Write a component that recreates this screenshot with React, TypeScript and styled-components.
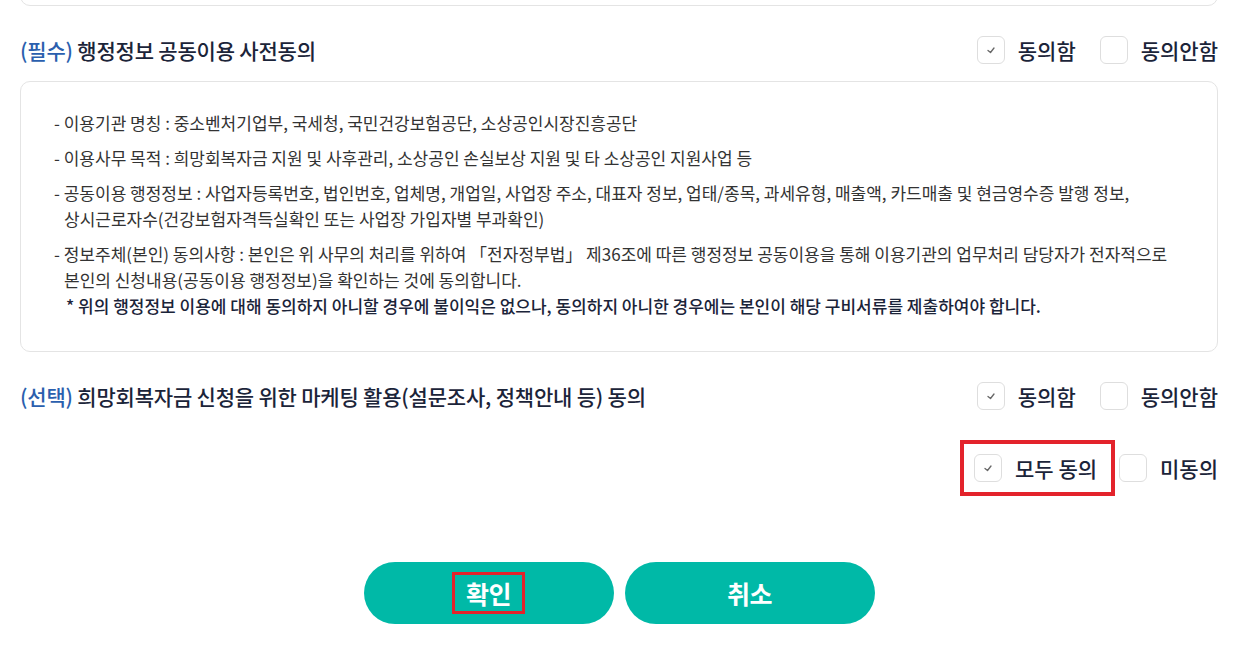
import React, { useState } from 'react'
import styled, { createGlobalStyle } from 'styled-components'

const GlobalStyle = createGlobalStyle`
    body {
        margin: 0;
        background: #fff;
        font-family: 'Noto Sans CJK KR', 'Noto Sans', sans-serif;
        color: #1b2439;
        overflow: hidden;
    }
`

type Choice = 'agree' | 'disagree'

const items = [
    ['- 이용기관 명칭 : 중소벤처기업부, 국세청, 국민건강보험공단, 소상공인시장진흥공단'],
    ['- 이용사무 목적 : 희망회복자금 지원 및 사후관리, 소상공인 손실보상 지원 및 타 소상공인 지원사업 등'],
    [
        '- 공동이용 행정정보 : 사업자등록번호, 법인번호, 업체명, 개업일, 사업장 주소, 대표자 정보, 업태/종목, 과세유형, 매출액, 카드매출 및 현금영수증 발행 정보,',
        '상시근로자수(건강보험자격득실확인 또는 사업장 가입자별 부과확인)'
    ],
    [
        '- 정보주체(본인) 동의사항 : 본인은 위 사무의 처리를 위하여 「전자정부법」 제36조에 따른 행정정보 공동이용을 통해 이용기관의 업무처리 담당자가 전자적으로',
        '본인의 신청내용(공동이용 행정정보)을 확인하는 것에 동의합니다.'
    ]
]

const CheckMark = () => (
    <svg width="12" height="10" viewBox="0 0 12 10">
        <polyline points="3,5.5 5.5,7.5 9,3" fill="none" stroke="#666" strokeWidth="1.3" strokeLinecap="round" strokeLinejoin="round" />
    </svg>
)

const CheckOption: React.FunctionComponent<{
    label: string
    checked: boolean
    onClick: () => void
}> = ({ label, checked, onClick }) => (
    <Option onClick={onClick}>
        <Box>{checked && <CheckMark />}</Box>
        <OptionText>{label}</OptionText>
    </Option>
)

const AgreeRow: React.FunctionComponent<{
    tag: string
    title: string
    value: Choice
    onChange: (value: Choice) => void
}> = ({ tag, title, value, onChange }) => (
    <Header>
        <Title>
            <Tag>{tag}</Tag> {title}
        </Title>
        <Options>
            <CheckOption label="동의함" checked={value === 'agree'} onClick={() => onChange('agree')} />
            <CheckOption label="동의안함" checked={value === 'disagree'} onClick={() => onChange('disagree')} />
        </Options>
    </Header>
)

export default function App() {
    const [required, setRequired] = useState<Choice>('agree')
    const [optional, setOptional] = useState<Choice>('agree')
    const allAgreed = required === 'agree' && optional === 'agree'

    const setAll = (value: Choice) => {
        setRequired(value)
        setOptional(value)
    }

    return (
        <Page>
            <GlobalStyle />
            <PrevCard />
            <AgreeRow
                tag="(필수)"
                title="행정정보 공동이용 사전동의"
                value={required}
                onChange={setRequired}
            />
            <Terms>
                {items.map((lines, index) => (
                    <Item key={index}>
                        {lines.map((line, i) => (
                            <Line key={i} $indent={i > 0}>{line}</Line>
                        ))}
                        {index === items.length - 1 && (
                            <Note>* 위의 행정정보 이용에 대해 동의하지 아니할 경우에 불이익은 없으나, 동의하지 아니한 경우에는 본인이 해당 구비서류를 제출하여야 합니다.</Note>
                        )}
                    </Item>
                ))}
            </Terms>
            <AgreeRow
                tag="(선택)"
                title="희망회복자금 신청을 위한 마케팅 활용(설문조사, 정책안내 등) 동의"
                value={optional}
                onChange={setOptional}
            />
            <AllRow>
                <Highlight>
                    <CheckOption label="모두 동의" checked={allAgreed} onClick={() => setAll('agree')} />
                </Highlight>
                <CheckOption label="미동의" checked={!allAgreed && required === 'disagree'} onClick={() => setAll('disagree')} />
            </AllRow>
            <Buttons>
                <Button><Marked>확인</Marked></Button>
                <Button>취소</Button>
            </Buttons>
        </Page>
    )
}

const Page = styled.div`
    padding: 0 35px 0 20px;
    height: 645px;
    box-sizing: border-box;
`

const PrevCard = styled.div`
    height: 24px;
    margin-top: -20px;
    border: 1px solid #e4e4e4;
    border-radius: 10px;
`

const Header = styled.div`
    display: flex;
    align-items: center;
    justify-content: space-between;
    height: 28px;
    margin-top: 30px;
`

const Title = styled.h3`
    margin: 0;
    font-size: 21px;
    font-weight: 500;
    letter-spacing: -0.2px;
    color: #1b2439;
`

const Tag = styled.span`
    color: #2b5fae;
`

const Options = styled.div`
    display: flex;
    align-items: center;
    gap: 24px;
`

const Option = styled.label`
    display: flex;
    align-items: center;
    gap: 13px;
    cursor: pointer;
`

const Box = styled.span`
    width: 26px;
    height: 26px;
    border: 1px solid #dedede;
    border-radius: 6px;
    background: #fff;
    display: flex;
    align-items: center;
    justify-content: center;
`

const OptionText = styled.span`
    font-size: 21px;
    font-weight: 500;
    color: #1b2439;
`

const Terms = styled.div`
    margin-top: 17px;
    margin-bottom: 3px;
    border: 1px solid #e4e4e4;
    border-radius: 10px;
    padding: 28px 30px 32px 33px;
`

const Item = styled.div`
    font-size: 17px;
    line-height: 26px;
    color: #333;
    & + & {
        margin-top: 9px;
    }
`

const Line = styled.div<{ $indent: boolean }>`
    padding-left: ${p => (p.$indent ? '10px' : '0')};
`

const Note = styled.div`
    padding-left: 12px;
    font-weight: 500;
    color: #1b2439;
`

const AllRow = styled.div`
    display: flex;
    justify-content: flex-end;
    align-items: center;
    gap: 4px;
    margin-top: 30px;
`

const Highlight = styled.div`
    border: 4px solid #e3232b;
    padding: 9px 14px 9px 10px;
`

const Buttons = styled.div`
    display: flex;
    justify-content: center;
    gap: 11px;
    margin-top: 66px;
`

const Button = styled.button`
    width: 250px;
    height: 62px;
    border: none;
    border-radius: 31px;
    background: #00b9a7;
    color: #fff;
    font-family: 'Noto Sans CJK KR', sans-serif;
    font-size: 25px;
    font-weight: 700;
    letter-spacing: -0.5px;
    cursor: pointer;
    display: flex;
    align-items: center;
    justify-content: center;
`

const Marked = styled.span`
    border: 3px solid #e3232b;
    padding: 0 11px;
    line-height: 36px;
`
